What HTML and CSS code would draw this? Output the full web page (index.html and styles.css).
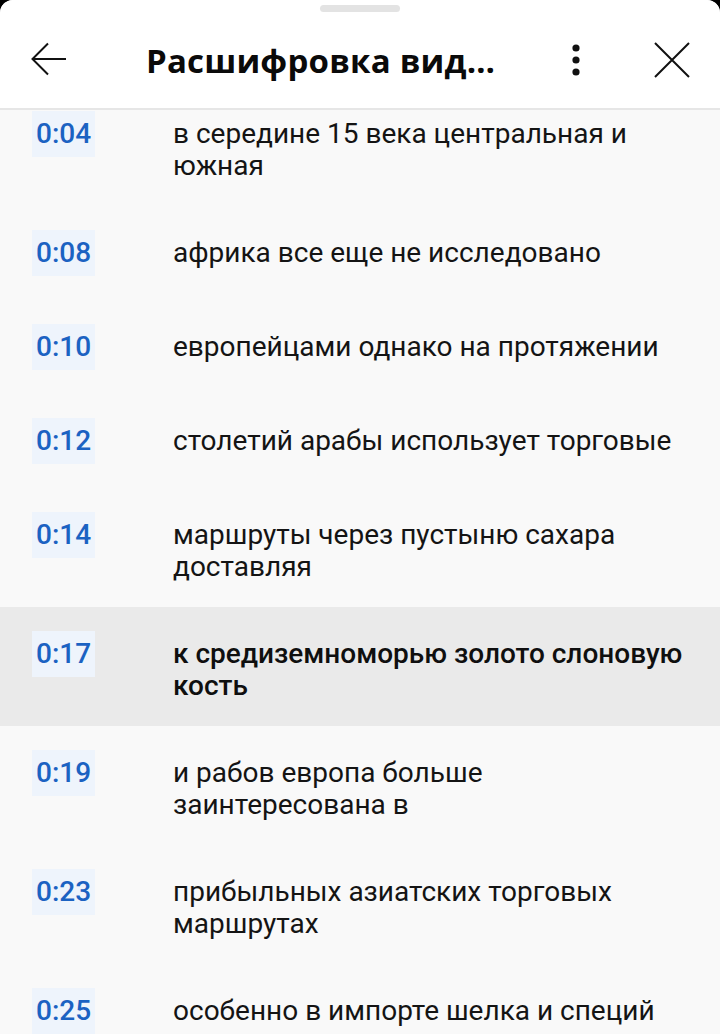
FILE: index.html
```html
<!DOCTYPE html>
<html lang="ru">
<head>
<meta charset="utf-8">
<title>Расшифровка видео</title>
<link rel="stylesheet" href="styles.css">
</head>
<body>
<div class="sheet">
  <header class="header">
    <div class="handle"></div>
    <div class="toolbar">
      <button class="icon-btn back" aria-label="Назад">
        <svg width="36" height="36" viewBox="0 0 36 36"><path d="M35 17H2M17 1.5L1.5 17L17 32.5" fill="none" stroke="#111" stroke-width="2"/></svg>
      </button>
      <h1 class="title">Расшифровка вид…</h1>
      <button class="icon-btn more" aria-label="Ещё">
        <svg width="12" height="36" viewBox="0 0 12 36"><circle cx="6" cy="6" r="3.6" fill="#111"/><circle cx="6" cy="18" r="3.6" fill="#111"/><circle cx="6" cy="30" r="3.6" fill="#111"/></svg>
      </button>
      <button class="icon-btn close" aria-label="Закрыть">
        <svg width="36" height="36" viewBox="0 0 36 36"><path d="M1 1L35 35M35 1L1 35" fill="none" stroke="#111" stroke-width="2"/></svg>
      </button>
    </div>
  </header>
  <div class="list">
    <div class="rows">
      <div class="row"><span class="time">0:04</span><p class="text">в середине 15 века центральная и южная</p></div>
      <div class="row"><span class="time">0:08</span><p class="text">африка все еще не исследовано</p></div>
      <div class="row"><span class="time">0:10</span><p class="text">европейцами однако на протяжении</p></div>
      <div class="row"><span class="time">0:12</span><p class="text">столетий арабы использует торговые</p></div>
      <div class="row"><span class="time">0:14</span><p class="text">маршруты через пустыню сахара доставляя</p></div>
      <div class="row active"><span class="time">0:17</span><p class="text">к средиземноморью золото слоновую кость</p></div>
      <div class="row"><span class="time">0:19</span><p class="text">и рабов европа больше<br>заинтересована в</p></div>
      <div class="row"><span class="time">0:23</span><p class="text">прибыльных азиатских торговых маршрутах</p></div>
      <div class="row"><span class="time">0:25</span><p class="text">особенно в импорте шелка и специй</p></div>
    </div>
  </div>
</div>
</body>
</html>
```
FILE: styles.css
```css
html, body {
  margin: 0;
  padding: 0;
  background: #000;
}
.sheet {
  width: 720px;
  height: 1034px;
  background: #f9f9f9;
  border-radius: 13px 13px 0 0;
  overflow: hidden;
  display: flex;
  flex-direction: column;
  font-family: Roboto, "Noto Sans", sans-serif;
}
.header {
  background: #fff;
  height: 108px;
  border-bottom: 2px solid #e6e6e6;
  display: flex;
  flex-direction: column;
  position: relative;
  z-index: 1;
  flex: none;
}
.handle {
  width: 80px;
  height: 7px;
  border-radius: 4px;
  background: #e3e3e3;
  margin: 5px auto 0;
}
.toolbar {
  flex: 1;
  display: flex;
  align-items: center;
  padding: 0 30px 0 31px;
}
.icon-btn {
  border: 0;
  background: none;
  padding: 0;
  margin: 0;
  display: flex;
  align-items: center;
  justify-content: center;
}
.back {
  width: 36px;
  height: 36px;
  margin-right: 79px;
}
.title {
  margin: 0;
  flex: 1;
  font-family: "Open Sans", Inter, sans-serif;
  font-weight: 700;
  font-size: 33px;
  letter-spacing: 0.2px;
  color: #0a0a0a;
  white-space: nowrap;
}
.more {
  width: 12px;
  height: 36px;
  margin-right: 72px;
}
.close {
  width: 36px;
  height: 36px;
}
.list {
  flex: 1;
  overflow: hidden;
}
.rows {
  margin-top: -23px;
}
.row {
  display: grid;
  grid-template-columns: 141px 1fr;
  align-items: start;
  padding: 24px 30px 24px 32px;
}
.row.active {
  background: #eaeaea;
}
.time {
  justify-self: start;
  height: 46px;
  line-height: 46px;
  padding: 0 4px;
  background: #eef4fc;
  color: #1b62c2;
  font-size: 28px;
  font-weight: 500;
}
.text {
  margin: 0;
  padding-top: 7px;
  font-size: 28px;
  line-height: 32px;
  color: #141414;
}
.row.active .text {
  font-weight: 500;
  color: #0f0f0f;
}
```
